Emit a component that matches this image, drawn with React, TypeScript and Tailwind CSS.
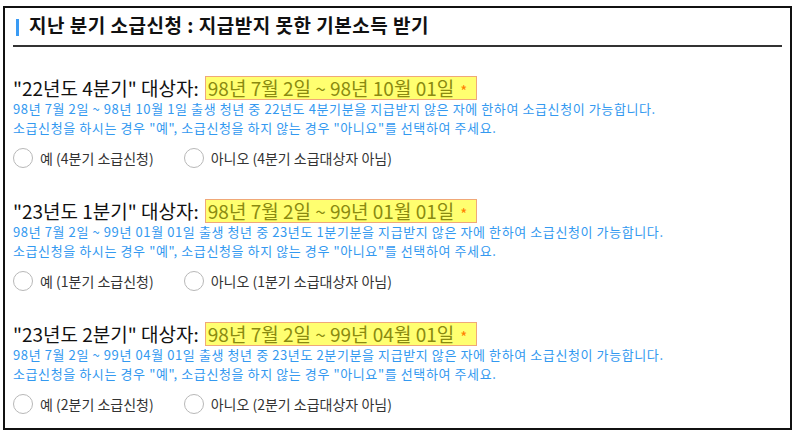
const sections = [
  {
    label: '"22년도 4분기" 대상자:',
    range: "98년 7월 2일 ~ 98년 10월 01일",
    desc: "98년 7월 2일 ~ 98년 10월 1일 출생 청년 중 22년도 4분기분을 지급받지 않은 자에 한하여 소급신청이 가능합니다.",
    q: "4분기",
  },
  {
    label: '"23년도 1분기" 대상자:',
    range: "98년 7월 2일 ~ 99년 01월 01일",
    desc: "98년 7월 2일 ~ 99년 01월 01일 출생 청년 중 23년도 1분기분을 지급받지 않은 자에 한하여 소급신청이 가능합니다.",
    q: "1분기",
  },
  {
    label: '"23년도 2분기" 대상자:',
    range: "98년 7월 2일 ~ 99년 04월 01일",
    desc: "98년 7월 2일 ~ 99년 04월 01일 출생 청년 중 23년도 2분기분을 지급받지 않은 자에 한하여 소급신청이 가능합니다.",
    q: "2분기",
  },
];

function Radio({ label }: { label: string }) {
  return (
    <label className="flex items-center gap-[7px]">
      <span className="h-[20px] w-[20px] rounded-full border border-[#b8b8b8] bg-white" />
      <span className="text-[14px] text-[#333]">{label}</span>
    </label>
  );
}

export default function App() {
  return (
    <div
      className="h-[438px] w-[799px] bg-white pl-[3px] pt-[6px]"
      style={{ fontFamily: '"Noto Sans CJK KR", "Noto Sans", sans-serif' }}
    >
      <div className="h-[424px] w-[789px] border-2 border-[#111] px-[8px]">
        <div className="flex h-[39px] items-end border-b-2 border-[#333] pb-[9px] pl-[3px]">
          <span className="mr-[10px] h-[17px] w-[3px] bg-[#3a9bf4]" />
          <h2 className="text-[19px] font-bold leading-[22px] tracking-[0.5px] text-[#111]">
            지난 분기 소급신청 : 지급받지 못한 기본소득 받기
          </h2>
        </div>

        <div className="flex flex-col gap-[30px] pt-[29px]">
          {sections.map((s) => (
            <div key={s.q} className="flex flex-col">
              <div className="flex h-[24px] items-center text-[19px] text-[#111]">
                <span className="leading-[24px]">{s.label}</span>
                <span className="ml-[6px] flex h-[24px] items-center border border-[#f0a878] bg-[#ffff70] pl-[2px] pr-[9px] leading-[22px] text-[#8a8a10]">
                  {s.range}
                  <span className="ml-[6px] mt-[5px] text-[15px] leading-[15px] text-[#ff8000]">*</span>
                </span>
              </div>
              <p className="text-[13px] leading-[18px] tracking-[0.6px] text-[#3399f0]">{s.desc}</p>
              <p className="text-[13px] leading-[19px] tracking-[0.6px] text-[#3399f0]">
                소급신청을 하시는 경우 "예", 소급신청을 하지 않는 경우 "아니요"를 선택하여 주세요.
              </p>
              <div className="mt-[10px] flex h-[22px] items-center gap-[30px]">
                <Radio label={`예 (${s.q} 소급신청)`} />
                <Radio label={`아니오 (${s.q} 소급대상자 아님)`} />
              </div>
            </div>
          ))}
        </div>
      </div>
    </div>
  );
}
